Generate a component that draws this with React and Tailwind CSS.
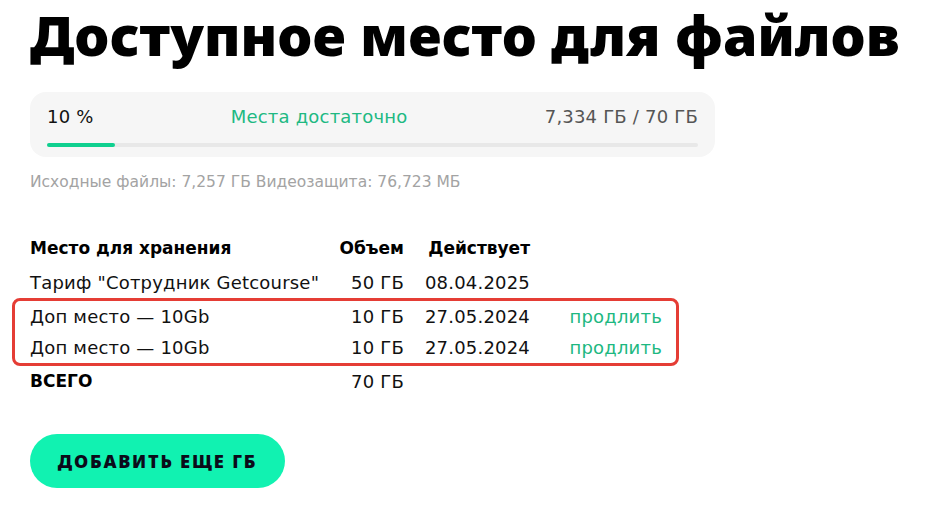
import React from "react";

const rows = [
  { name: 'Тариф "Сотрудник Getcourse"', size: "50 ГБ", date: "08.04.2025" },
];

const extra = [
  { name: "Доп место — 10Gb", size: "10 ГБ", date: "27.05.2024" },
  { name: "Доп место — 10Gb", size: "10 ГБ", date: "27.05.2024" },
];

const Row = ({ name, size, date, link, className = "" }) => (
  <div className={`flex items-center ${className}`}>
    <div className="w-[300px] whitespace-nowrap">{name}</div>
    <div className="w-[74px] text-right">{size}</div>
    <div className="w-[126px] text-right">{date}</div>
    <div className="w-[132px] text-right text-[#1db881]">{link}</div>
  </div>
);

const App = () => {
  return (
    <div
      className="bg-white w-[942px] h-[515px] px-[30px] text-[#111] overflow-hidden"
      style={{ fontFamily: '"DejaVu Sans", sans-serif' }}
    >
      <h1
        className="text-[55.5px] leading-[70px] font-black text-black whitespace-nowrap"
        style={{ fontFamily: '"Noto Sans", sans-serif' }}
      >
        Доступное место для файлов
      </h1>

      <div className="mt-[22px] w-[685px] h-[65px] rounded-2xl bg-[#f6f6f6] px-[17px] pt-[12px]">
        <div className="flex items-center justify-between text-[18px] leading-[26px] tracking-[0.2px]">
          <span className="text-[#111]">10 %</span>
          <span className="text-[#20b982]">Места достаточно</span>
          <span className="text-[#555]">7,334 ГБ / 70 ГБ</span>
        </div>
        <div className="mt-[13px] h-[4px] rounded-full bg-[#e8e8e8]">
          <div className="h-full w-[10.5%] rounded-full bg-[#0fd08f]" />
        </div>
      </div>

      <p className="mt-[15px] text-[15.5px] leading-[20px] text-[#a3a3a3]">
        Исходные файлы: 7,257 ГБ Видеозащита: 76,723 МБ
      </p>

      <div className="mt-[40px] text-[18px] tracking-[0.2px]">
        <Row
          name="Место для хранения"
          size="Объем"
          date="Действует"
          className="h-[34px] font-bold text-[17px] tracking-normal text-black"
        />
        {rows.map((r, i) => (
          <Row key={i} {...r} className="h-[32px]" />
        ))}
        <div className="-ml-[18px] w-[667px] pl-[15px] border-[3px] border-[#e53d35] rounded-[8px]">
          {extra.map((r, i) => (
            <Row key={i} {...r} link="продлить" className="h-[31px]" />
          ))}
        </div>
        <Row
          name={<span className="font-bold text-[17px] tracking-normal text-black">ВСЕГО</span>}
          size="70 ГБ"
          className="h-[30px]"
        />
      </div>

      <button
        className="mt-[38px] h-[54px] w-[255px] rounded-full bg-[#11f2b1] text-[18px] font-black tracking-[1.8px] text-[#0b0b1a]"
        style={{ fontFamily: '"Noto Sans", sans-serif' }}
      >
        ДОБАВИТЬ ЕЩЕ ГБ
      </button>
    </div>
  );
};

export default App;
